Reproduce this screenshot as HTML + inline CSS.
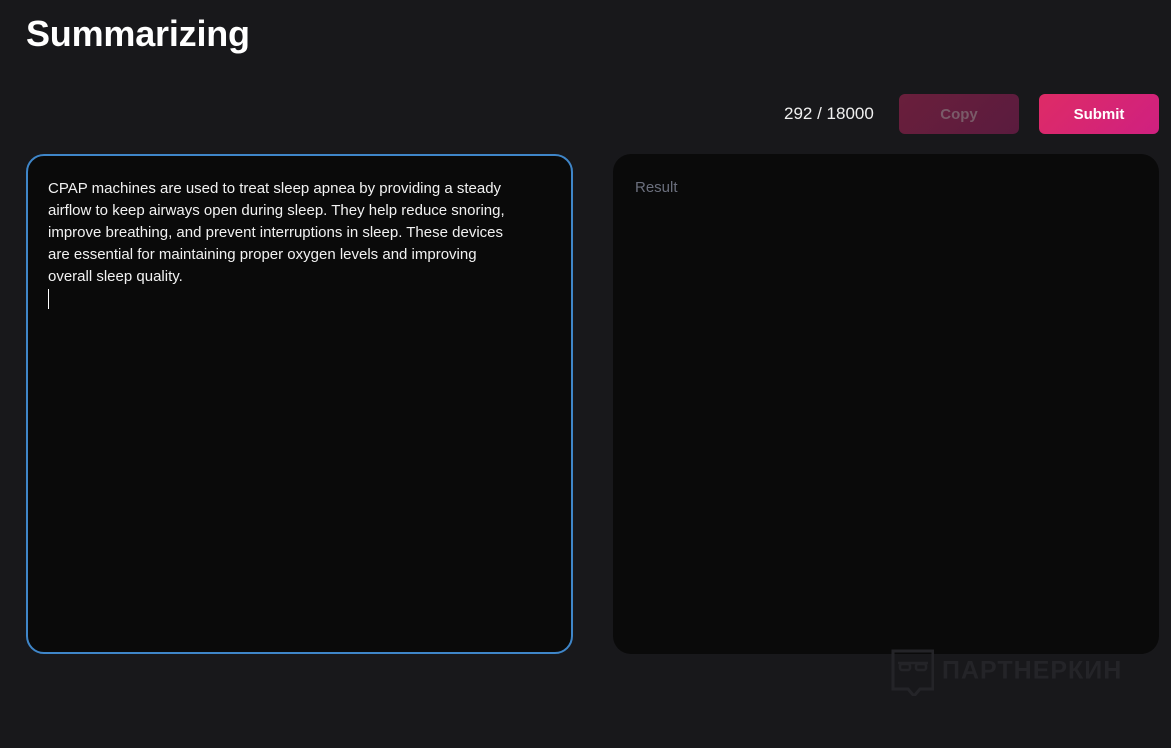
<!DOCTYPE html>
<html><head><meta charset="utf-8"><style>
body{margin:0;width:1171px;height:748px;background:#18181b;font-family:"Liberation Sans",sans-serif;overflow:hidden;position:relative;color:#fff}
h1{position:absolute;left:26px;top:13px;margin:0;font-size:36px;font-weight:bold;letter-spacing:-0.2px}
.cnt{position:absolute;left:784px;top:104px;font-size:17px;color:#f0f0f0}
.btn{position:absolute;top:94px;width:120px;height:40px;border-radius:6px;font-weight:bold;font-size:15px;text-align:center;line-height:41px}
.copy{left:899px;background:linear-gradient(135deg,#6a1f3c,#5a1b3e);color:#7a5a68}
.sub{left:1039px;background:linear-gradient(135deg,#de2b66,#cf2080);color:#fff}
.box{position:absolute;top:154px;height:500px;border-radius:18px;background:#0a0a0a;box-sizing:border-box}
.l{left:26px;width:547px;border:2px solid #3f86c9;padding:22px 60px 23px 20px;font-size:15px;line-height:22px;color:#f2f2f2}
.r{left:613px;width:546px;padding:25px 22px;font-size:15px;color:#6b6f7d}
.cur{display:inline-block;width:1px;height:20px;background:#fff;vertical-align:middle}
.wm{position:absolute;left:890px;top:648px;color:#242428;font-weight:bold;font-size:25px;letter-spacing:1px}
</style></head><body>
<h1>Summarizing</h1>
<div class="cnt">292 / 18000</div>
<div class="btn copy">Copy</div>
<div class="btn sub">Submit</div>
<div class="box l">CPAP machines are used to treat sleep apnea by providing a steady airflow to keep airways open during sleep. They help reduce snoring, improve breathing, and prevent interruptions in sleep. These devices are essential for maintaining proper oxygen levels and improving overall sleep quality.<br><span class="cur"></span></div>
<div class="box r">Result</div>
<div class="wm"><svg width="44" height="48" viewBox="0 0 44 48" style="vertical-align:middle;margin-right:8px"><path d="M3 3h40v38H30l-6 7-6-7H3z" fill="none" stroke="#242428" stroke-width="3"/><rect x="10" y="16" width="10" height="6" rx="2" fill="none" stroke="#242428" stroke-width="2.5"/><rect x="26" y="16" width="10" height="6" rx="2" fill="none" stroke="#242428" stroke-width="2.5"/><path d="M8 15h30" stroke="#242428" stroke-width="2.5"/></svg>ПАРТНЕРКИН</div>
</body></html>
